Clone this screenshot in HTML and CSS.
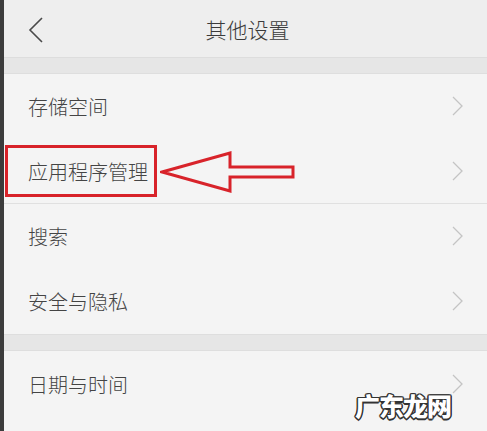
FILE: index.html
```html
<!DOCTYPE html>
<html lang="zh-CN">
<head>
    <meta charset="UTF-8">
    <meta name="viewport" content="width=device-width, initial-scale=1.0">
    <title>其他设置</title>
    <link rel="stylesheet" href="styles.css">
</head>
<body>
    <div class="screen">
        <header class="top-bar">
            <svg class="back" width="16" height="28" viewBox="0 0 16 28">
                <polyline points="14,2 2,14 14,26" fill="none" stroke="#4a4a4a" stroke-width="1.6"/>
            </svg>
            <h1 class="title">其他设置</h1>
        </header>

        <div class="spacer"></div>

        <ul class="group">
            <li class="row"><span>存储空间</span><svg class="chevron" width="11" height="20" viewBox="0 0 11 20"><polyline points="1,1 10,10 1,19"/></svg></li>
            <li class="row row-divider"><span>应用程序管理</span><svg class="chevron" width="11" height="20" viewBox="0 0 11 20"><polyline points="1,1 10,10 1,19"/></svg></li>
            <li class="row"><span>搜索</span><svg class="chevron" width="11" height="20" viewBox="0 0 11 20"><polyline points="1,1 10,10 1,19"/></svg></li>
            <li class="row"><span>安全与隐私</span><svg class="chevron" width="11" height="20" viewBox="0 0 11 20"><polyline points="1,1 10,10 1,19"/></svg></li>
        </ul>

        <div class="spacer"></div>

        <ul class="group">
            <li class="row"><span>日期与时间</span><svg class="chevron" width="11" height="20" viewBox="0 0 11 20"><polyline points="1,1 10,10 1,19"/></svg></li>
        </ul>

        <!-- annotation drawn on top of the screenshot -->
        <div class="mark-box"></div>
        <svg class="mark-arrow" width="140" height="44" viewBox="0 0 140 44">
            <polygon points="2,22 70,3 70,17 133,17 133,27 70,27 70,41" fill="none" stroke="#d8232a" stroke-width="3" stroke-linejoin="miter"/>
        </svg>

        <div class="watermark">广东龙网</div>
    </div>
</body>
</html>
```

FILE: styles.css
```css
body {
    margin: 0;
    font-family: "Noto Sans CJK SC", "Noto Sans", sans-serif;
    background-color: #3c3c3c;
}

.screen {
    position: relative;
    margin-left: 4px;
    height: 431px;
    overflow: hidden;
    background-color: #f4f4f4;
}

.top-bar {
    height: 57px;
    display: flex;
    align-items: center;
    justify-content: center;
    position: relative;
    background-color: #eeeeee;
    border-bottom: 1px solid #dddddd;
}

.back {
    position: absolute;
    left: 24px;
    top: 16px;
}

.title {
    margin: 0;
    font-size: 21px;
    font-weight: 300;
    color: #3a3a3a;
    padding-left: 4px;
}

.spacer {
    height: 15px;
    background-color: #e6e6e6;
    border-bottom: 1px solid #dedede;
}

.group {
    list-style: none;
    margin: 0;
    padding: 0;
}

.group + .spacer {
    border-top: 1px solid #dedede;
}

.row {
    height: 64px;
    padding: 0 24px 0 24px;
    display: flex;
    align-items: center;
    justify-content: space-between;
    font-size: 20px;
    font-weight: 300;
    color: #444;
}

.row-divider {
    border-bottom: 1px solid #e0e0e0;
    border-top: 1px solid transparent;
}

.row:last-child {
    height: 66px;
}

.chevron polyline {
    fill: none;
    stroke: #c4c4c4;
    stroke-width: 1.3;
}

.mark-box {
    position: absolute;
    left: 1px;
    top: 145px;
    width: 146px;
    height: 46px;
    border: 3px solid #d8232a;
}

.mark-arrow {
    position: absolute;
    left: 156px;
    top: 150px;
}

.watermark {
    position: absolute;
    left: 351px;
    top: 387px;
    font-size: 25px;
    font-weight: 900;
    color: #fff;
    letter-spacing: -1px;
    text-shadow:
        1.5px 0 0 #333, -1.5px 0 0 #333, 0 1.5px 0 #333, 0 -1.5px 0 #333,
        1px 1px 0 #333, -1px -1px 0 #333, 1px -1px 0 #333, -1px 1px 0 #333;
}
```
